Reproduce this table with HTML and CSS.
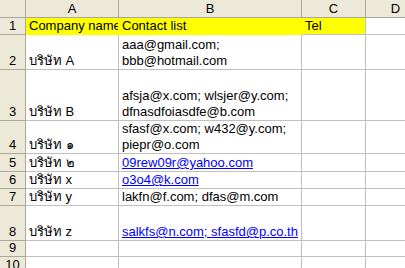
FILE: index.html
```html
<!DOCTYPE html>
<html>
<head>
<meta charset="utf-8">
<link rel="stylesheet" href="styles.css">
</head>
<body>
<div class="sheet">
  <div class="corner"></div>
  <div class="colhead">A</div>
  <div class="colhead">B</div>
  <div class="colhead">C</div>
  <div class="colhead">D</div>

  <div class="rowhead">1</div>
  <div class="cell fill clip">Company name</div>
  <div class="cell fill">Contact list</div>
  <div class="cell fill fill-end">Tel</div>
  <div class="cell"></div>

  <div class="rowhead">2</div>
  <div class="cell">บริษัท A</div>
  <div class="cell">aaa@gmail.com;<br>bbb@hotmail.com</div>
  <div class="cell"></div>
  <div class="cell"></div>

  <div class="rowhead">3</div>
  <div class="cell">บริษัท B</div>
  <div class="cell">afsja@x.com; wlsjer@y.com;<br>dfnasdfoiasdfe@b.com</div>
  <div class="cell"></div>
  <div class="cell"></div>

  <div class="rowhead">4</div>
  <div class="cell">บริษัท ๑</div>
  <div class="cell">sfasf@x.com; w432@y.com;<br>piepr@o.com</div>
  <div class="cell"></div>
  <div class="cell"></div>

  <div class="rowhead">5</div>
  <div class="cell">บริษัท ๒</div>
  <div class="cell"><span class="link">09rew09r@yahoo.com</span></div>
  <div class="cell"></div>
  <div class="cell"></div>

  <div class="rowhead">6</div>
  <div class="cell">บริษัท x</div>
  <div class="cell"><span class="link">o3o4@k.com</span></div>
  <div class="cell"></div>
  <div class="cell"></div>

  <div class="rowhead">7</div>
  <div class="cell">บริษัท y</div>
  <div class="cell">lakfn@f.com; dfas@m.com</div>
  <div class="cell"></div>
  <div class="cell"></div>

  <div class="rowhead">8</div>
  <div class="cell">บริษัท z</div>
  <div class="cell"><span class="link">salkfs@n.com; sfasfd@p.co.th</span></div>
  <div class="cell"></div>
  <div class="cell"></div>

  <div class="rowhead">9</div>
  <div class="cell"></div>
  <div class="cell"></div>
  <div class="cell"></div>
  <div class="cell"></div>

  <div class="rowhead">10</div>
  <div class="cell"></div>
  <div class="cell"></div>
  <div class="cell"></div>
  <div class="cell"></div>
</div>
</body>
</html>
```

FILE: styles.css
```css
html, body {
  margin: 0;
  padding: 0;
  background: #ffffff;
  overflow: hidden;
}

.sheet {
  display: grid;
  grid-template-columns: 26px 93px 183px 64px 60px;
  grid-template-rows: 18px 17px 35px 51px 33px 18px 17px 17px 35px 16px 17px;
  width: 405px;
  height: 268px;
  overflow: hidden;
  font-family: "Liberation Sans", Arial, sans-serif;
  font-size: 13px;
  line-height: 16px;
  color: #000000;
}

.corner,
.colhead,
.rowhead {
  box-sizing: border-box;
  background: #ece9d8;
  border-right: 1px solid #aca899;
  border-bottom: 1px solid #aca899;
  display: flex;
  align-items: center;
  justify-content: center;
}

.colhead {
  padding-top: 1px;
}

.rowhead {
  align-items: flex-end;
}

.cell {
  box-sizing: border-box;
  border-right: 1px solid #c0c0c0;
  border-bottom: 1px solid #c0c0c0;
  display: flex;
  flex-direction: column;
  justify-content: flex-end;
  padding-left: 3px;
  white-space: nowrap;
  overflow: visible;
  position: relative;
}

.clip {
  overflow: hidden;
}

.fill {
  background: #ffff00;
  border-right-color: #ffff00;
  border-bottom-color: #ffff00;
}

.fill-end {
  border-right-color: #c0c0c0;
  border-bottom-color: #c0c0c0;
}

.link {
  color: #0000ff;
  text-decoration: underline;
}
```
